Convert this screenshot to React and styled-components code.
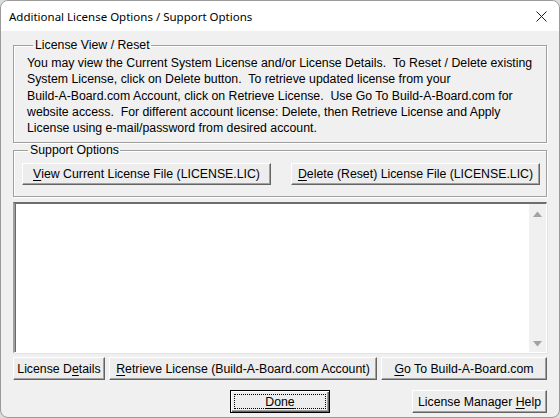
import React from "react";
import styled, { createGlobalStyle } from "styled-components";

const Global = createGlobalStyle`
  html, body { margin: 0; padding: 0; background: #dcdcdc; }
  body { width: 560px; height: 418px; overflow: hidden; }
  * { box-sizing: border-box; }
`;

const Window = styled.div`
  width: 560px;
  height: 418px;
  border: 1px solid #9a9a9a;
  border-radius: 8px;
  overflow: hidden;
  display: flex;
  flex-direction: column;
  background: #f0f0f0;
  font-family: "Liberation Sans", Arial, sans-serif;
  font-size: 12.3px;
  color: #000;
`;

const TitleBar = styled.div`
  height: 30px;
  flex: none;
  background: #fff;
  display: flex;
  align-items: center;
  justify-content: space-between;
  padding-left: 8px;
  font-family: "Noto Sans", "Open Sans", sans-serif;
  font-size: 11.5px;
`;

const CloseBtn = styled.div`
  width: 36px;
  height: 30px;
  display: flex;
  align-items: center;
  justify-content: center;
`;

const Body = styled.div`
  flex: 1;
  padding: 7px 12px 0 12px;
  display: flex;
  flex-direction: column;
`;

const Group = styled.fieldset`
  margin: 0;
  padding: ${(p) => p.$pad};
  border: 1px solid #a0a0a0;
  box-shadow: inset 1px 1px 0 #fff, 1px 1px 0 #fff;
  min-width: 0;
`;

const Legend = styled.legend`
  margin-left: 6px;
  padding: 0 1px 0 2px;
  line-height: 15px;
  font-size: 12.3px;
`;

const Para = styled.p`
  margin: 0;
  line-height: 16.3px;
  white-space: pre;
`;

const BtnRow = styled.div`
  display: flex;
  justify-content: space-between;
`;

const Button = styled.button`
  font-family: "Liberation Sans", Arial, sans-serif;
  font-size: 12.3px;
  color: #000;
  background: #ededed;
  height: ${(p) => p.$h || 22}px;
  width: ${(p) => p.$w}px;
  flex: none;
  padding: 0;
  margin: 0;
  border: 1px solid;
  border-color: #fff #646464 #646464 #fff;
  box-shadow: inset -1px -1px 0 #a0a0a0;
  display: flex;
  align-items: center;
  justify-content: center;
  white-space: pre;
  u { text-decoration: underline; text-underline-offset: 2px; }
`;

const DefaultButton = styled(Button)`
  border: 1px solid #000;
  box-shadow: inset 1px 1px 0 #fff, inset -1px -1px 0 #646464, inset -2px -2px 0 #a0a0a0;
  position: relative;
  &::after {
    content: "";
    position: absolute;
    inset: 3px;
    border: 1px dotted #000;
  }
`;

const Output = styled.div`
  height: 151px;
  margin-top: 5px;
  flex: none;
  display: flex;
  background: #fff;
  border-style: solid;
  border-width: 2px 1px 1px 2px;
  border-color: #6d6d6d #fff #fff #a0a0a0;
  box-shadow: inset 1px 0 0 #696969, 1px 1px 0 #e3e3e3;
`;

const TextArea = styled.div`
  flex: 1;
`;

const ScrollTrack = styled.div`
  width: 17px;
  background: #f0f0f0;
  display: flex;
  flex-direction: column;
  justify-content: space-between;
  align-items: center;
  padding: 7px 0 5px;
`;

const ActionRow = styled.div`
  display: flex;
  margin-top: 4px;
  gap: 4px;
  margin-right: -1px;
`;

const FooterRow = styled.div`
  display: flex;
  margin-top: 10px;
  margin-right: -1px;
  padding-left: 217px;
  gap: 82px;
`;

const Arrow = ({ down }) => (
  <svg width="9" height="6" viewBox="0 0 9 6">
    <polygon
      points={down ? "0,0 9,0 4.5,5.5" : "4.5,0.5 9,6 0,6"}
      fill="#a3a3a3"
    />
  </svg>
);

export default function App() {
  return (
    <>
      <Global />
      <Window>
        <TitleBar>
          <span>Additional License Options / Support Options</span>
          <CloseBtn>
            <svg width="11" height="11" viewBox="0 0 11 11">
              <path d="M0.5 0.5 L10.5 10.5 M10.5 0.5 L0.5 10.5" stroke="#1a1a1a" strokeWidth="1" />
            </svg>
          </CloseBtn>
        </TitleBar>
        <Body>
          <Group $pad="2px 8px 6px 13px">
            <Legend>License View / Reset</Legend>
            <Para>
              {"You may view the Current System License and/or License Details.  To Reset / Delete existing\nSystem License, click on Delete button.  To retrieve updated license from your\nBuild-A-Board.com Account, click on Retrieve License.  Use Go To Build-A-Board.com for\nwebsite access.  For different account license: Delete, then Retrieve License and Apply\nLicense using e-mail/password from desired account."}
            </Para>
          </Group>
          <Group $pad="5px 6px 11px 8px">
            <Legend>Support Options</Legend>
            <BtnRow>
              <Button $w={249}>
                <u>V</u>iew Current License File (LICENSE.LIC)
              </Button>
              <Button $w={249}>
                <u>D</u>elete (Reset) License File (LICENSE.LIC)
              </Button>
            </BtnRow>
          </Group>
          <Output>
            <TextArea />
            <ScrollTrack>
              <Arrow />
              <Arrow down />
            </ScrollTrack>
          </Output>
          <ActionRow>
            <Button $w={92} $h={23}>
              License D<u>e</u>tails
            </Button>
            <Button $w={268} $h={23}>
              <u>R</u>etrieve License (Build-A-Board.com Account)
            </Button>
            <Button $w={166} $h={23}>
              <u>G</u>o To Build-A-Board.com
            </Button>
          </ActionRow>
          <FooterRow>
            <DefaultButton $w={100} $h={23}>
              <u>Done</u>
            </DefaultButton>
            <Button $w={135} $h={23}>
              License Manager <u>H</u>elp
            </Button>
          </FooterRow>
        </Body>
      </Window>
    </>
  );
}
